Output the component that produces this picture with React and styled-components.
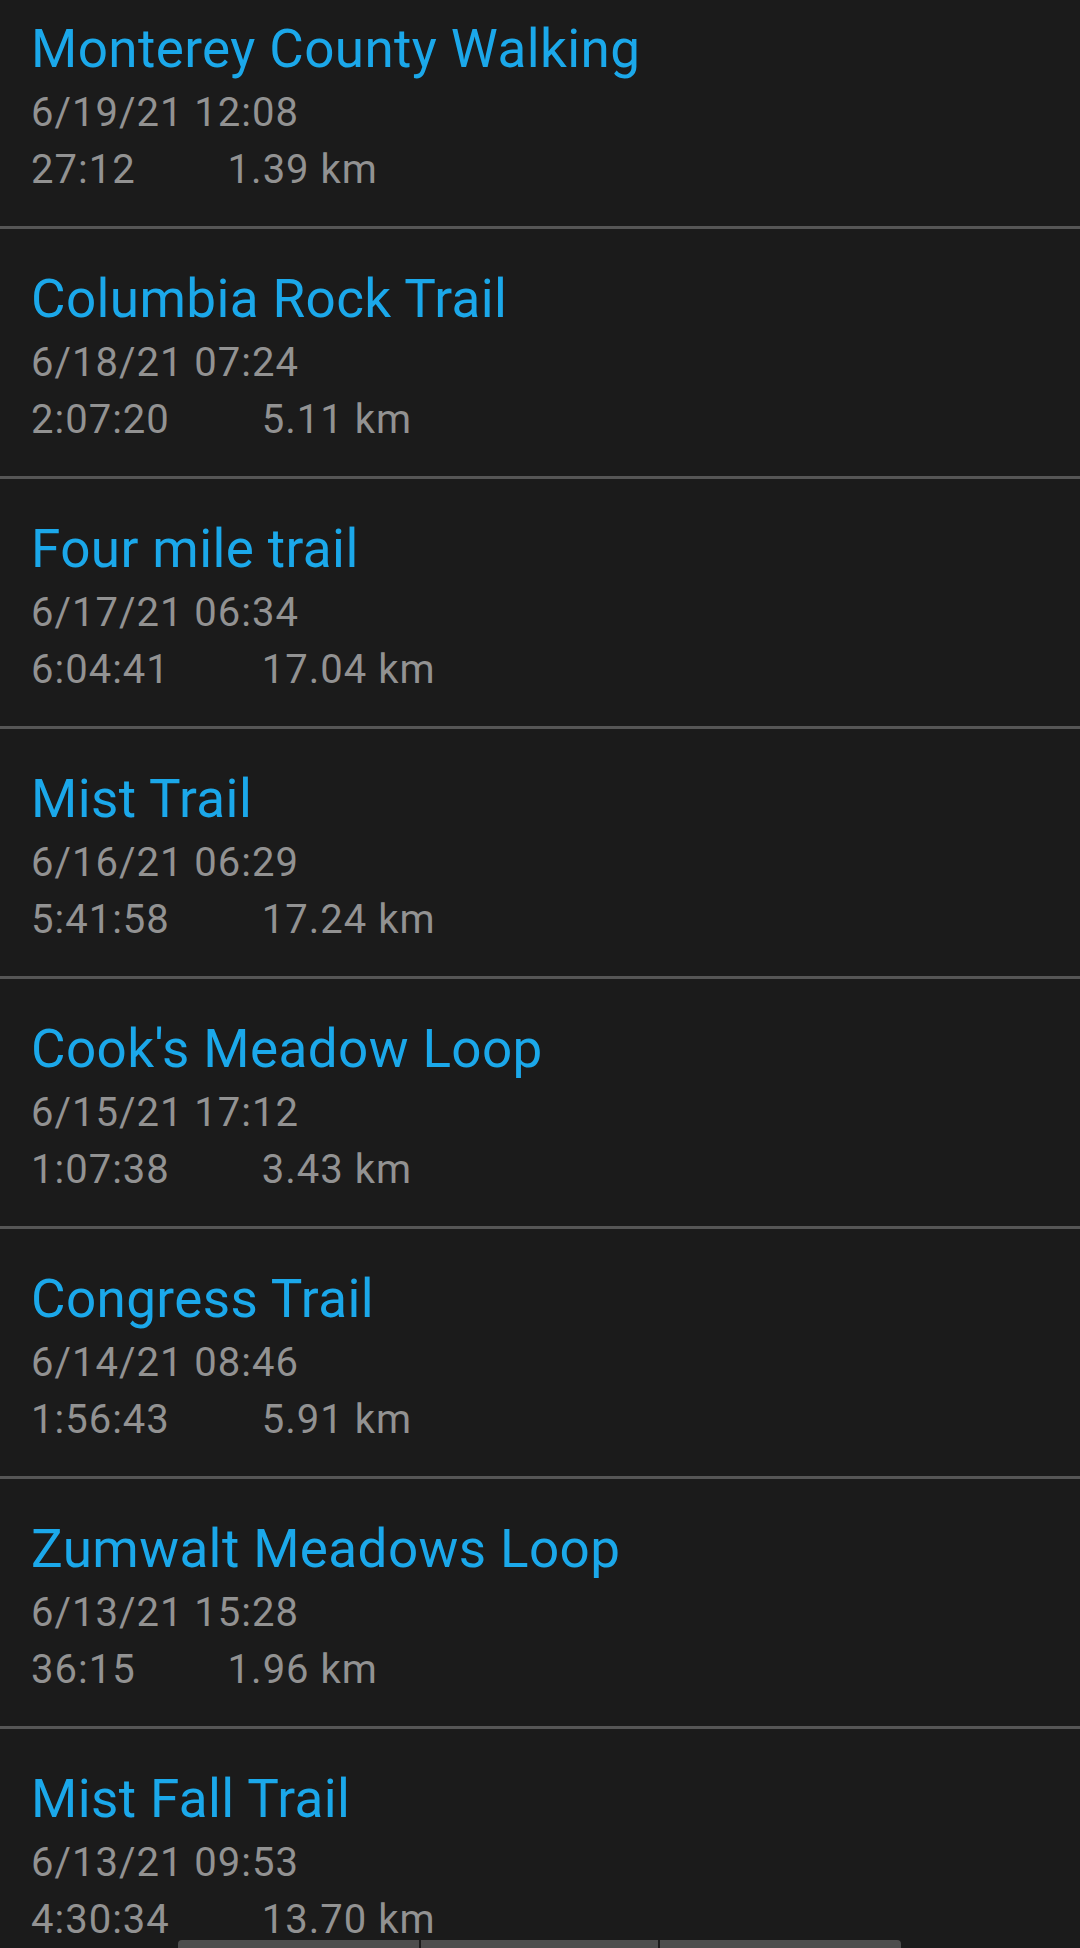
import React from "react";
import styled, { createGlobalStyle } from "styled-components";

const GlobalStyle = createGlobalStyle`
  html, body {
    margin: 0;
    padding: 0;
    background: #1b1b1b;
  }
  body {
    font-family: Roboto, "Noto Sans", "Liberation Sans", sans-serif;
  }
`;

const Screen = styled.div`
  width: 1080px;
  height: 1948px;
  overflow: hidden;
  background: #1b1b1b;
  position: relative;
`;

const List = styled.ul`
  list-style: none;
  margin: -21px 0 0 0;
  padding: 0;
`;

const Row = styled.li`
  height: 250px;
  box-sizing: border-box;
  padding: 35px 31px 0;
  border-bottom: 3px solid #565656;
`;

const Title = styled.div`
  font-size: 53px;
  letter-spacing: 0.4px;
  line-height: 70px;
  color: #1ba8ea;
  white-space: nowrap;
`;

const Line = styled.div`
  font-size: 40px;
  letter-spacing: 1px;
  line-height: 57px;
  color: #929292;
  white-space: nowrap;
  display: flex;
  gap: ${(p) => p.$gap || 0}px;
`;

const BottomBar = styled.div`
  position: absolute;
  left: 178px;
  bottom: 0;
  width: 723px;
  height: 8px;
  display: flex;
  gap: 2px;
  border-radius: 4px 4px 0 0;
  overflow: hidden;
`;

const BarSegment = styled.div`
  flex: ${(p) => p.$w};
  background: #4d4d4d;
`;

const hikes = [
  ["Monterey County Walking", "6/19/21 12:08", "27:12", "1.39 km"],
  ["Columbia Rock Trail", "6/18/21 07:24", "2:07:20", "5.11 km"],
  ["Four mile trail", "6/17/21 06:34", "6:04:41", "17.04 km"],
  ["Mist Trail", "6/16/21 06:29", "5:41:58", "17.24 km"],
  ["Cook's Meadow Loop", "6/15/21 17:12", "1:07:38", "3.43 km"],
  ["Congress Trail", "6/14/21 08:46", "1:56:43", "5.91 km"],
  ["Zumwalt Meadows Loop", "6/13/21 15:28", "36:15", "1.96 km"],
  ["Mist Fall Trail", "6/13/21 09:53", "4:30:34", "13.70 km"],
];

export default function App() {
  return (
    <Screen>
      <GlobalStyle />
      <List>
        {hikes.map(([name, date, dur, dist]) => (
          <Row key={name}>
            <Title>{name}</Title>
            <Line>{date}</Line>
            <Line $gap={92}>
              <span>{dur}</span>
              <span>{dist}</span>
            </Line>
          </Row>
        ))}
      </List>
      <BottomBar>
        <BarSegment $w={241} />
        <BarSegment $w={237} />
        <BarSegment $w={241} />
      </BottomBar>
    </Screen>
  );
}
